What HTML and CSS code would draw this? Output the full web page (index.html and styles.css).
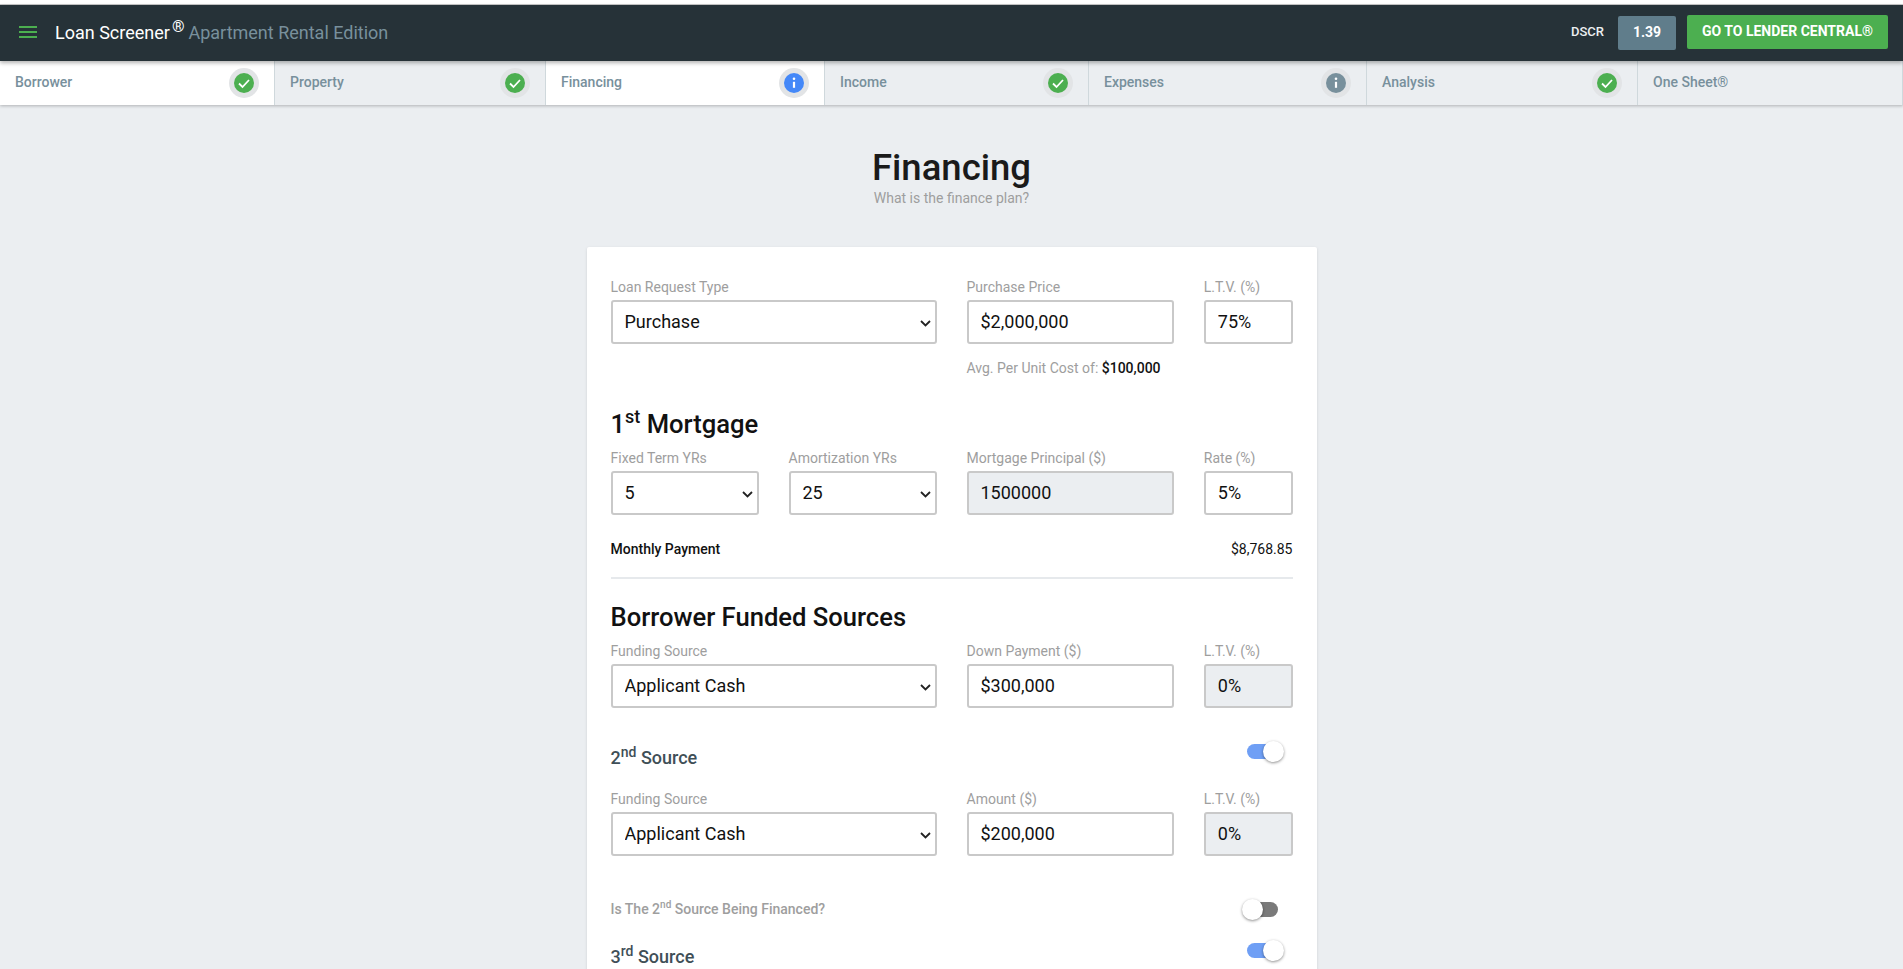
FILE: index.html
```html
<!DOCTYPE html>
<html lang="en">
<head>
    <meta charset="UTF-8">
    <title>Loan Screener - Financing</title>
    <link rel="stylesheet" href="styles.css">
</head>
<body>

    <div class="top-strip"></div>

    <!-- Top bar -->
    <header class="topbar">
        <div class="brand">
            <svg class="menu-icon" width="18" height="12" viewBox="0 0 18 12"><path d="M0 1h18M0 6h18M0 11h18" stroke="#4caf50" stroke-width="2"/></svg>
            <span class="brand-name">Loan Screener<sup>®</sup></span>
            <span class="brand-edition">Apartment Rental Edition</span>
        </div>
        <div class="top-actions">
            <span class="dscr-label">DSCR</span>
            <span class="dscr-value">1.39</span>
            <a class="lender-button">GO TO LENDER CENTRAL®</a>
        </div>
    </header>

    <!-- Step tabs -->
    <nav class="tabs">
        <div class="tab tab-active">Borrower
            <span class="status"><svg class="status-dot" viewBox="0 0 20 20"><circle cx="10" cy="10" r="10" fill="#4caf50"/><path d="M5 10.5l3.5 3.5L15 7" fill="none" stroke="#fff" stroke-width="1.8"/></svg></span>
        </div>
        <div class="tab">Property
            <span class="status"><svg class="status-dot" viewBox="0 0 20 20"><circle cx="10" cy="10" r="10" fill="#4caf50"/><path d="M5 10.5l3.5 3.5L15 7" fill="none" stroke="#fff" stroke-width="1.8"/></svg></span>
        </div>
        <div class="tab tab-active">Financing
            <span class="status"><svg class="status-dot" viewBox="0 0 20 20"><circle cx="10" cy="10" r="10" fill="#4488f8"/><circle cx="10" cy="5.8" r="1.3" fill="#fff"/><path d="M10 8.8v6" stroke="#fff" stroke-width="2.2"/></svg></span>
        </div>
        <div class="tab">Income
            <span class="status"><svg class="status-dot" viewBox="0 0 20 20"><circle cx="10" cy="10" r="10" fill="#4caf50"/><path d="M5 10.5l3.5 3.5L15 7" fill="none" stroke="#fff" stroke-width="1.8"/></svg></span>
        </div>
        <div class="tab">Expenses
            <span class="status"><svg class="status-dot" viewBox="0 0 20 20"><circle cx="10" cy="10" r="10" fill="#78909c"/><circle cx="10" cy="5.8" r="1.3" fill="#fff"/><path d="M10 8.8v6" stroke="#fff" stroke-width="2.2"/></svg></span>
        </div>
        <div class="tab">Analysis
            <span class="status"><svg class="status-dot" viewBox="0 0 20 20"><circle cx="10" cy="10" r="10" fill="#4caf50"/><path d="M5 10.5l3.5 3.5L15 7" fill="none" stroke="#fff" stroke-width="1.8"/></svg></span>
        </div>
        <div class="tab">One Sheet®</div>
    </nav>

    <main class="page">
        <h1>Financing</h1>
        <p class="subtitle">What is the finance plan?</p>

        <section class="card">
            <div class="form-row">
                <div class="field span-6">
                    <label>Loan Request Type</label>
                    <select><option>Purchase</option></select>
                </div>
                <div class="field span-4">
                    <label>Purchase Price</label>
                    <input type="text" value="$2,000,000">
                    <div class="hint">Avg. Per Unit Cost of: <b>$100,000</b></div>
                </div>
                <div class="field span-2">
                    <label>L.T.V. (%)</label>
                    <input type="text" value="75%">
                </div>
            </div>

            <h2 class="mortgage-title">1<sup>st</sup> Mortgage</h2>
            <div class="form-row">
                <div class="field span-3">
                    <label>Fixed Term YRs</label>
                    <select><option>5</option></select>
                </div>
                <div class="field span-3">
                    <label>Amortization YRs</label>
                    <select><option>25</option></select>
                </div>
                <div class="field span-4">
                    <label>Mortgage Principal ($)</label>
                    <input class="locked" type="text" value="1500000" readonly>
                </div>
                <div class="field span-2">
                    <label>Rate (%)</label>
                    <input type="text" value="5%">
                </div>
            </div>

            <div class="payment-row">
                <strong>Monthly Payment</strong>
                <span>$8,768.85</span>
            </div>
            <hr>

            <h2>Borrower Funded Sources</h2>
            <div class="form-row">
                <div class="field span-6">
                    <label>Funding Source</label>
                    <select><option>Applicant Cash</option></select>
                </div>
                <div class="field span-4">
                    <label>Down Payment ($)</label>
                    <input type="text" value="$300,000">
                </div>
                <div class="field span-2">
                    <label>L.T.V. (%)</label>
                    <input class="locked" type="text" value="0%" readonly>
                </div>
            </div>

            <div class="source-row source-second">
                <h3>2<sup>nd</sup> Source</h3>
                <span class="switch switch-on"></span>
            </div>
            <div class="form-row">
                <div class="field span-6">
                    <label>Funding Source</label>
                    <select><option>Applicant Cash</option></select>
                </div>
                <div class="field span-4">
                    <label>Amount ($)</label>
                    <input type="text" value="$200,000">
                </div>
                <div class="field span-2">
                    <label>L.T.V. (%)</label>
                    <input class="locked" type="text" value="0%" readonly>
                </div>
            </div>

            <div class="source-row source-question">
                <span class="question">Is The 2<sup>nd</sup> Source Being Financed?</span>
                <span class="switch"></span>
            </div>
            <div class="source-row source-third">
                <h3>3<sup>rd</sup> Source</h3>
                <span class="switch switch-on"></span>
            </div>
        </section>
    </main>

</body>
</html>
```

FILE: styles.css
```css
* {
    box-sizing: border-box;
    margin: 0;
    padding: 0;
    font-family: "Roboto", "Liberation Sans", sans-serif;
}

body {
    height: 100vh;
    overflow: hidden;
    background-color: #ebeef1;
    color: #111;
}

sup {
    line-height: 0;
}

.top-strip {
    height: 5px;
    background-color: #fff;
    border-bottom: 1px solid #c8c8c8;
}

/* Top bar */
.topbar {
    display: flex;
    justify-content: space-between;
    align-items: center;
    height: 56px;
    padding: 0 15px 0 19px;
    background-color: #263238;
    position: relative;
    box-shadow: 0 2px 4px rgba(0, 0, 0, 0.3);
}

.brand {
    display: flex;
    align-items: center;
    padding-bottom: 2px;
    font-size: 18px;
}

.menu-icon {
    margin-right: 18px;
}

.brand-name {
    color: #fff;
    margin-right: 4px;
}

.brand-name sup {
    margin-left: 2px;
    font-size: 16px;
}

.brand-edition {
    color: #78909c;
}

.top-actions {
    display: flex;
    align-items: center;
}

.dscr-label {
    color: #eceff1;
    font-size: 13px;
    font-weight: 500;
    margin-right: 14px;
    margin-bottom: 3px;
}

.dscr-value {
    width: 58px;
    height: 34px;
    line-height: 32px;
    margin-right: 11px;
    text-align: center;
    color: #fff;
    font-size: 14px;
    font-weight: 700;
    background-color: #607d8b;
    border-radius: 2px;
}

.lender-button {
    width: 201px;
    height: 34px;
    line-height: 32px;
    margin-bottom: 2px;
    text-align: center;
    color: #fff;
    font-size: 14px;
    font-weight: 700;
    background-color: #4caf50;
    border-radius: 2px;
}

/* Step tabs */
.tabs {
    display: grid;
    grid-template-columns: 275px 271px 279px 264px 278px 271px 1fr;
    height: 44px;
    box-shadow: 0 1px 3px rgba(0, 0, 0, 0.25);
}

.tab {
    display: flex;
    justify-content: space-between;
    align-items: center;
    padding: 0 15px 2px;
    font-size: 14px;
    font-weight: 500;
    color: #78909c;
    border-right: 1px solid #cfd8dc;
}

.tab-active {
    background-color: #fff;
}

.status {
    display: flex;
    align-items: center;
    justify-content: center;
    width: 30px;
    height: 30px;
    margin-top: 2px;
    border-radius: 50%;
    background-color: #e2e4e6;
}

.status-dot {
    width: 20px;
    height: 20px;
}

/* Page */
.page {
    padding-top: 42px;
}

h1 {
    text-align: center;
    font-size: 36.5px;
    font-weight: 500;
    line-height: 41px;
    color: #1a1a1a;
}

.subtitle {
    text-align: center;
    font-size: 14px;
    line-height: 20px;
    color: #9e9e9e;
}

.card {
    width: 730px;
    margin: 39px auto 0;
    padding: 30px 24px;
    background-color: #fff;
    border-radius: 2px;
    box-shadow: 0 1px 3px rgba(0, 0, 0, 0.12);
}

.form-row {
    display: grid;
    grid-template-columns: repeat(12, 1fr);
    column-gap: 30px;
}

.span-2 { grid-column: span 2; }
.span-3 { grid-column: span 3; }
.span-4 { grid-column: span 4; }
.span-6 { grid-column: span 6; }

label {
    display: block;
    height: 20px;
    line-height: 20px;
    margin-bottom: 3px;
    font-size: 14px;
    color: #9e9e9e;
}

input, select {
    width: 100%;
    height: 44px;
    padding: 0 12px 2px;
    font-size: 18px;
    color: #111;
    background-color: #fff;
    border: 2px solid #c9c9c9;
    border-radius: 3px;
}

select {
    appearance: none;
    background-image: url("data:image/svg+xml,%3Csvg xmlns='http://www.w3.org/2000/svg' width='11' height='7' viewBox='0 0 11 7'%3E%3Cpath d='M1 1l4.5 4.5L10 1' fill='none' stroke='%23222' stroke-width='1.8'/%3E%3C/svg%3E");
    background-repeat: no-repeat;
    background-position: right 4px top 18px;
}

.locked {
    background-color: #ebeef1;
}

.hint {
    margin-top: 14px;
    font-size: 14px;
    line-height: 20px;
    color: #9e9e9e;
}

.hint b {
    font-weight: 500;
    color: #111;
}

h2 {
    font-size: 25.6px;
    font-weight: 500;
    line-height: 30px;
    margin-bottom: 9px;
    color: #111;
}

.mortgage-title {
    margin-top: 31px;
}

.mortgage-title sup {
    font-size: 18px;
}

.payment-row {
    display: flex;
    justify-content: space-between;
    margin-top: 24px;
    font-size: 14px;
    line-height: 20px;
}

.payment-row strong {
    font-weight: 500;
}

hr {
    height: 2px;
    margin: 18px 0 23px;
    border: none;
    background-color: #e6e9ec;
}

.source-row {
    display: flex;
    justify-content: space-between;
    align-items: flex-start;
}

.source-second {
    margin-top: 33px;
    height: 48px;
}

.source-question {
    margin-top: 43px;
    height: 21px;
}

.source-third {
    margin-top: 20px;
    height: 29px;
}

h3 {
    align-self: flex-end;
    font-size: 18px;
    font-weight: 500;
    line-height: 24px;
    color: #3f4f57;
}

h3 sup {
    font-size: 14px;
}

.source-second h3 {
    align-self: flex-start;
    margin-top: 5px;
}

.question {
    font-size: 14px;
    font-weight: 500;
    line-height: 20px;
    color: #9e9e9e;
}

.question sup {
    font-size: 10px;
}

/* Toggle */
.switch {
    position: relative;
    width: 42px;
    height: 21px;
    margin-right: 9px;
}

.switch::before {
    content: "";
    position: absolute;
    left: 5px;
    top: 3px;
    width: 31px;
    height: 15px;
    border-radius: 8px;
    background-color: #7a7a7a;
}

.switch::after {
    content: "";
    position: absolute;
    left: 0;
    top: 0;
    width: 21px;
    height: 21px;
    border-radius: 50%;
    background-color: #fff;
    box-shadow: 0 1px 3px rgba(0, 0, 0, 0.45);
}

.switch-on::before {
    background-color: #6f9ff5;
}

.switch-on::after {
    left: 21px;
}
```
